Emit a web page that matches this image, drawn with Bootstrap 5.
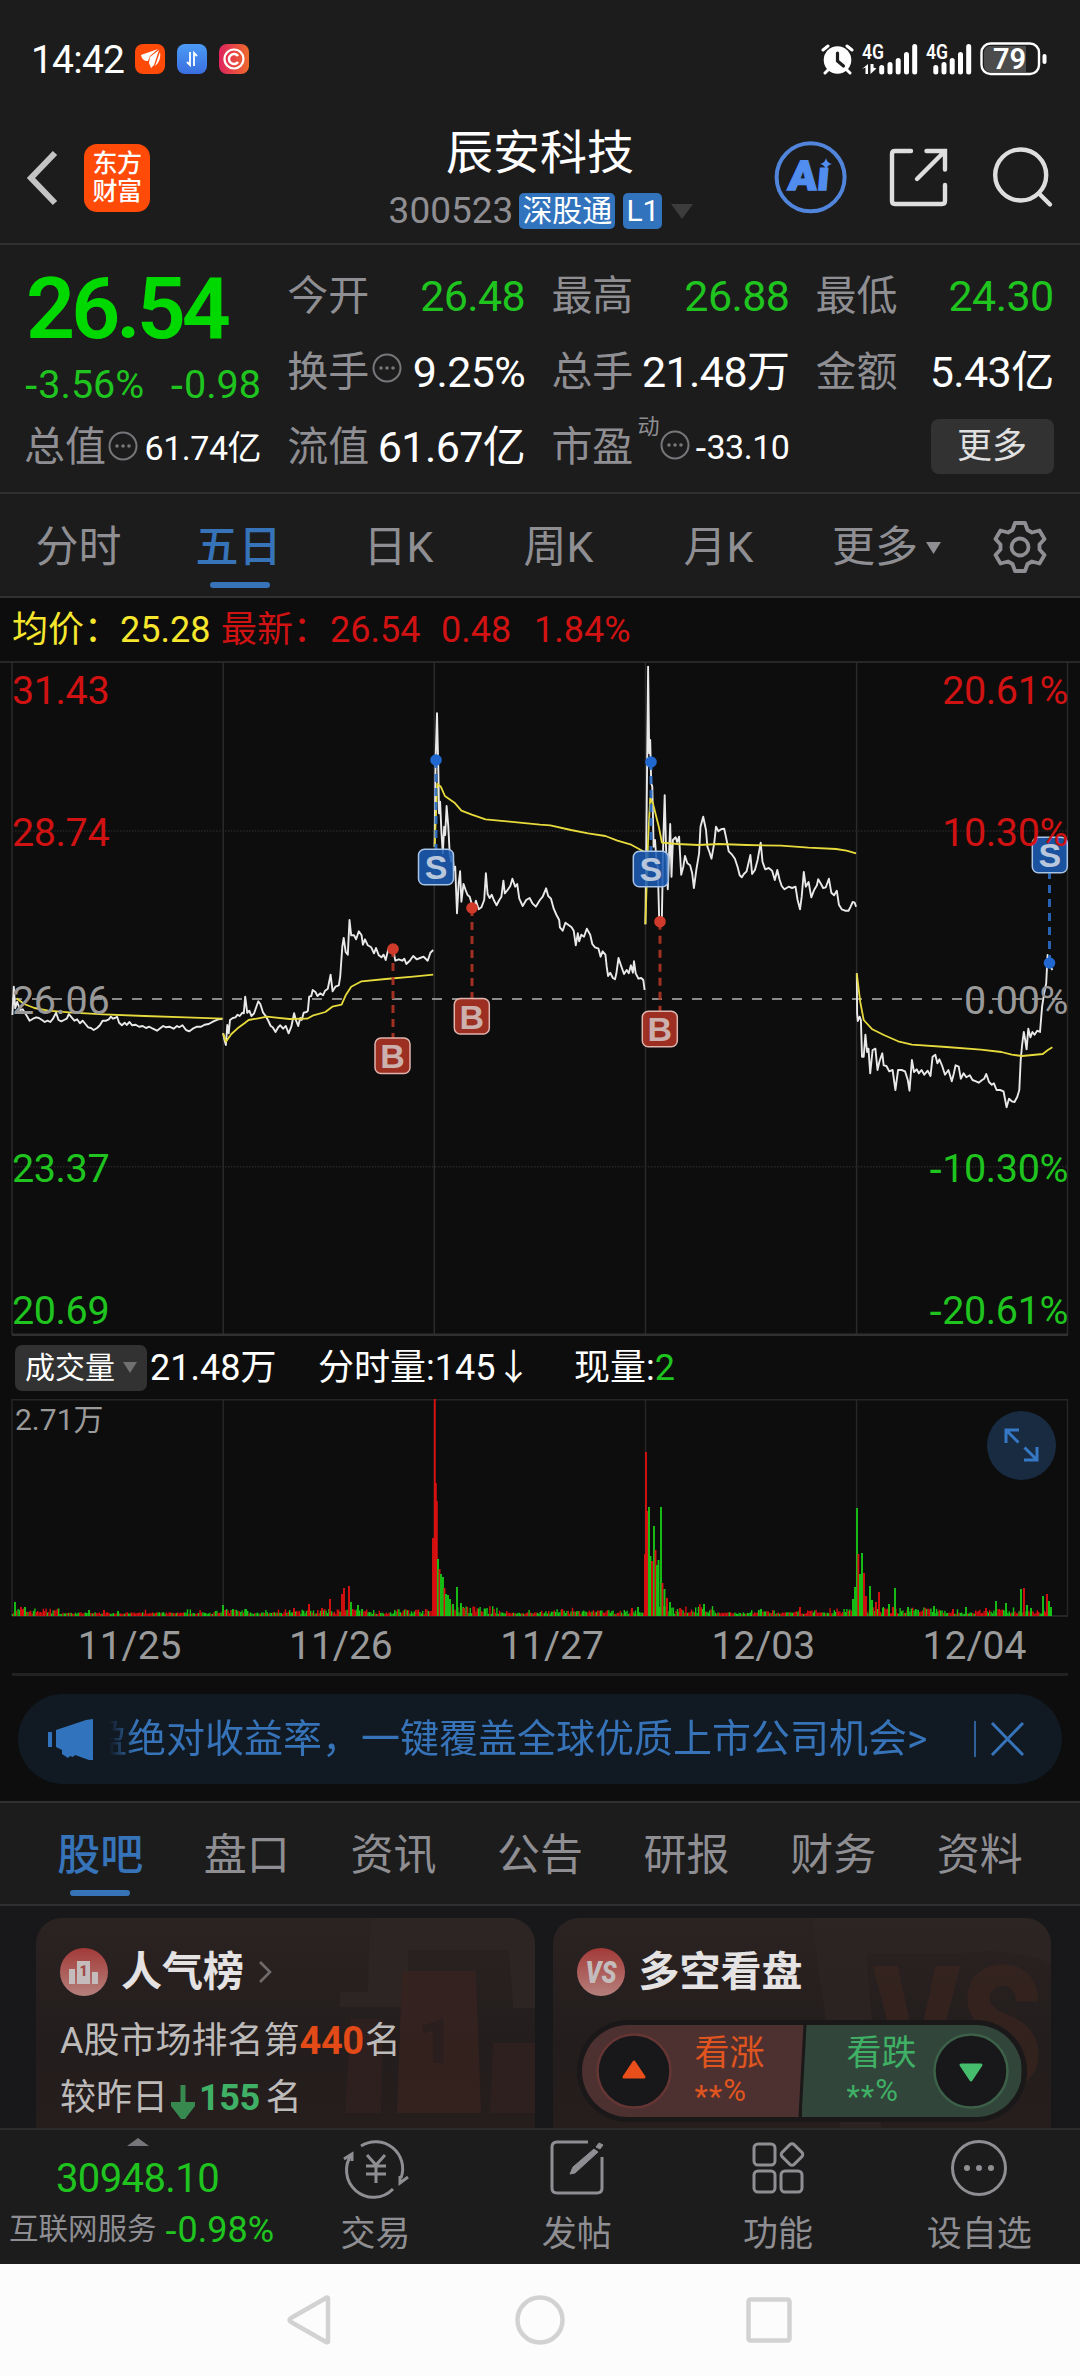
<!DOCTYPE html>
<html lang="zh-CN">
<head>
<meta charset="utf-8">
<meta name="viewport" content="width=1080">
<title>辰安科技 300523</title>
<link rel="stylesheet" href="https://cdn.jsdelivr.net/npm/bootstrap@5.3.0/dist/css/bootstrap.min.css">
<style>
  :root { --up:#d01212; --down:#1fc41f; --blue:#3673b8; --dim:#8e8e93; --panel:#1c1c1c; --ink:#0d0d0d; }
  body { width:1080px; height:2376px; overflow:hidden; background:var(--ink); color:#fff;
         font-family:Roboto,"Noto Sans CJK SC",sans-serif; line-height:1; }
  svg { display:block; flex:none; }
  .panel { background:var(--panel); }
  .ruled { border-bottom:2px solid #303032; }
  .dim { color:var(--dim); } .fall { color:var(--down); } .rise { color:var(--up); } .brand { color:var(--blue); }
  .hy { font-family:"DejaVu Sans",sans-serif; }
  .statusbar { height:118px; padding:2px 33px 0 31px; font-size:39px; }
  .clock { letter-spacing:-.8px; width:94px; }
  .titlebar { height:127px; display:grid; grid-template-columns:1fr auto 1fr; padding:0 26px 5px 26px; }
  .stockname { font-size:47px; line-height:60px; font-weight:400; }
  .coderow { margin:10px -2px 0 0; }
  .stockcode { font-size:37px; line-height:36px; letter-spacing:0; }
  .tagbox { background:#3273bd; border-radius:5px; height:36px; line-height:35px; font-size:30px; padding:0 3px; }
  .applogo { width:66px; height:68px; border-radius:13px; background:#ff4a08; font-size:25px; line-height:28px; font-weight:500; letter-spacing:-.5px; }
  .quote { height:249px; padding:14px 25px 0 24px; display:grid; grid-template-columns:237px repeat(3,238px); column-gap:26.2px; }
  .qline { height:75.4px; display:flex; align-items:center; font-size:41px; white-space:nowrap; }
  .qline b { font-weight:400; font-size:43px; margin-left:auto; letter-spacing:-.6px; }
  .qline b.slim { font-size:34px; letter-spacing:-.5px; }
  .bigprice { height:98px; line-height:100px; font-size:86px; font-weight:600; letter-spacing:-4px; color:#00d900; padding-left:2px; }
  .chg { height:53px; line-height:54px; font-size:39.5px; }
  .morebtn { width:123px; height:55px; border-radius:8px; background:#323232; color:#e0e0e0; font-size:35px; margin:-2px 0 0 auto; }
  .supmark { font-size:22px; align-self:flex-start; margin-top:6px; }
  .periods { height:104px; }
  .periods .cell { width:160px; position:relative; font-size:43px; padding:5px 3px 0 0; }
  .bar { position:absolute; bottom:8px; left:50%; width:60px; height:6px; margin-left:-30px; border-radius:3px; background:var(--blue); }
  .legendrow { height:63px; padding:1px 12px 0; font-size:36px; }
  .kchart text { font-size:39.5px; letter-spacing:-.4px; }
  .volhead { height:63px; padding:0 15px; font-size:36px; }
  .volbtn { width:132px; height:46px; border-radius:7px; background:#323232; font-size:30px; padding-left:10px; margin-right:3px; }
  .volwrap { position:relative; height:218px; }
  .expand { position:absolute; right:24px; top:12px; }
  .dates { height:59px; margin:0 12px; padding:2px 0 0 12px; border-bottom:3px solid #222; font-size:39px; color:#9a9a9a; }
  .dates span { flex:0 0 211.3px; text-align:center; margin-right:-.1px; }
  .pillnote { height:90px; margin:18px 18px 17px; border-radius:45px; background:#111922; padding-left:29px; }
  .ticker { width:835px; overflow:hidden; white-space:nowrap; font-size:39px; line-height:60px; margin-left:15px;
            -webkit-mask-image:linear-gradient(90deg,transparent 0,#000 26px); mask-image:linear-gradient(90deg,transparent 0,#000 26px); }
  .ticker span { margin-left:-21px; }
  .channels { height:105px; padding:0 27px; border-top:2px solid #303032; }
  .channels .cell { flex:1 1 0; position:relative; font-size:43px; padding-top:4px; }
  .feed { height:222px; background:#18181a; padding:12px 29px 0 36px; gap:18px; overflow:hidden; }
  .tile { position:relative; height:210px; border-radius:26px 26px 0 0; background:linear-gradient(180deg,#2b2322,#231d1d 60%,#261e1d); overflow:hidden; }
  .tile > svg { position:absolute; right:0; top:0; }
  .tile > div { position:relative; }
  .tilehead { font-size:41px; font-weight:700; height:54px; margin-top:27px; padding-left:24px; color:#e4e2e2; }
  .tileline { font-size:36px; height:57px; padding-left:24px; color:#bdbaba; white-space:nowrap; }
  .tileline b { font-size:38px; letter-spacing:-.4px; }
  .vote { margin:21px 0 0 24px; width:450px; height:102px; border-radius:51px; background:#1a1819; padding:5px; color:#e0551f; }
  .votehalf { width:222px; height:92px; background:#4c3130; border-radius:46px 0 0 46px; clip-path:polygon(0 0,100% 0,calc(100% - 5px) 100%,0 100%); }
  .votehalf.short { background:#31453a; color:#3fb065; border-radius:0 46px 46px 0; clip-path:polygon(5px 0,100% 0,100% 100%,0 100%); margin-left:-2px; width:220px; }
  .votetext { font-size:35px; line-height:40px; width:72px; }
  .votetext small { display:block; font-size:31px; line-height:34px; }
  .votetext i { font-style:normal; position:relative; top:6px; letter-spacing:1px; }
  .dock { height:136px; border-top:2px solid #2b2b2c; }
  .dock .cell { width:201.4px; font-size:35px; line-height:50px; }
  .idx { font-size:40px; line-height:56px; margin-top:5px; letter-spacing:-.6px; }
  .sector { height:46px; width:275px; gap:8px; padding-left:8px; }
  .sysnav { height:112px; background:#fcfcfc; }
</style>
<script src="https://cdn.jsdelivr.net/npm/bootstrap@5.3.0/dist/js/bootstrap.bundle.min.js"></script>
</head>
<body>

<div class="statusbar panel d-flex align-items-center">
  <span class="clock">14:42</span>
  <svg style="margin:-2px 0 0 10px" width="116" height="30" viewBox="135 44 116 30">
    <defs>
      <linearGradient id="gb" x2="0" y2="1"><stop stop-color="#4c9bf5"/><stop offset="1" stop-color="#3a6ee0"/></linearGradient>
      <linearGradient id="gr" x2="1" y2="0"><stop stop-color="#e0245e"/><stop offset="1" stop-color="#ee6a2c"/></linearGradient>
    </defs>
    <rect x="135" y="44" width="30" height="30" rx="8" fill="#ff4a08"/>
    <path d="M141 55l17-6-8 7-2 5c-4 0-6-2-7-6zM149 63l1-6 9-7-5 15-3 3zM155 66l5-14c1 6-1 11-5 14z" fill="#fff"/>
    <rect x="177" y="44" width="30" height="30" rx="8" fill="url(#gb)"/>
    <path d="M190 52v13l-3-3M194 66V53l3 3" fill="none" stroke="#fff" stroke-width="1.8"/>
    <rect x="219" y="44" width="30" height="30" rx="8" fill="url(#gr)"/>
    <circle cx="234" cy="59" r="9.5" fill="none" stroke="#fff" stroke-width="2.2"/>
    <path d="M238 56a5 5 0 1 0 0 6" fill="none" stroke="#fff" stroke-width="2.4"/>
  </svg>
  <svg class="ms-auto" style="margin-top:-2px" width="226" height="36" viewBox="820 41 226 36">
    <g fill="none" stroke="#fff" stroke-linecap="round">
      <path stroke-width="3" d="M822 50l5-4M851 50l-5-4M828 69l-4 4M845 69l4 4"/>
    </g>
    <circle cx="836.5" cy="60" r="13.8" fill="#fff"/>
    <path d="M836.5 53v8l6 5" fill="none" stroke="#1c1c1c" stroke-width="3.2" stroke-linecap="round"/>
    <g fill="#fff" font-size="20" font-weight="600">
      <text x="861" y="58.500" textLength="22" lengthAdjust="spacingAndGlyphs">4G</text>
      <text x="925" y="58.500" textLength="22" lengthAdjust="spacingAndGlyphs">4G</text>
    </g>
    <path d="M861 69l6-5v10h-2.500v-6.500zM869.500 64v10l6-5.500-3-1v-3.500z" fill="#fff"/>
    <g stroke="#fff" stroke-width="5" stroke-linecap="round">
      <path d="M880.700 67.500v4.500M889 64.500v7.500M897.200 60.500v11.500M905.500 54.500v17.500M913.700 46.500v25.500M934.800 67.500v4.500M943 64.500v7.500M951.200 60.500v11.500M959.500 54.500v17.500M967.700 46.500v25.500"/>
    </g>
    <rect x="980.500" y="43.500" width="57.500" height="30.500" rx="9" fill="none" stroke="#fff" stroke-width="2.4"/>
    <path d="M989 46h36v26h-36q-6 0-6-7v-12q0-7 6-7z" fill="#4c4c4c"/>
    <rect x="1041.500" y="54" width="4" height="10" rx="2" fill="#fff"/>
    <text x="1008.500" y="69" text-anchor="middle" font-size="29" font-weight="600" fill="#fff">79</text>
  </svg>
</div>

<header class="titlebar panel ruled">
  <div class="d-flex align-items-center">
    <svg width="34" height="58" viewBox="0 0 34 58"><path d="M29 4L5 29l24 25" fill="none" stroke="#c4c4c4" stroke-width="6"/></svg>
    <div class="applogo ms-4 text-center d-flex flex-column justify-content-center"><span>东方</span><span>财富</span></div>
  </div>
  <div class="d-flex flex-column align-items-center">
    <div class="stockname" style="margin-top:5px">辰安科技</div>
    <div class="coderow d-flex align-items-center">
      <span class="stockcode dim" style="margin-right:6px">300523</span>
      <span class="tagbox me-2">深股通</span><span class="tagbox">L1</span>
      <svg style="margin-left:9px" width="22" height="15"><path d="M0 0h22L11 15z" fill="#3c3c3c"/></svg>
    </div>
  </div>
  <div class="d-flex align-items-center justify-content-end">
    <svg width="280" height="76" viewBox="772 140 280 76" fill="none">
      <circle cx="808.600" cy="177.300" r="34" stroke="#5085db" stroke-width="4"/>
      <text x="786" y="190.500" font-size="41" font-weight="900" fill="#508dee" textLength="41" lengthAdjust="spacingAndGlyphs" stroke="#508dee" stroke-width="1.500" transform="translate(16 0) skewX(-5)">Aı</text>
      <path d="M824 158q1 5 6 6-5 1-6 6-1-5-6-6 5-1 6-6z" fill="#508dee"/>
      <g stroke="#dedede" stroke-width="4.400" stroke-linecap="round">
        <path d="M909 151h-16q-3 0-3 3v47q0 3 3 3h47q3 0 3-3v-16"/>
        <path d="M924.500 151h18.500v18.500M942 152l-27 27"/>
        <circle cx="1018.700" cy="175" r="25.500"/><path d="M1037 193.500l11 11"/>
      </g>
    </svg>
  </div>
</header>

<section class="quote panel ruled">
  <div>
    <div class="bigprice">26.54</div>
    <div class="chg fall d-flex justify-content-between"><span><span class="hy">-</span>3.56%</span><span><span class="hy">-</span>0.98</span></div>
    <div class="qline dim">总值<svg width="30" height="30" style="margin:-4px 0 0 2px"><use href="#more-dot"/></svg><b class="slim text-white">61.74亿</b></div>
  </div>
  <div>
    <div class="qline dim">今开<b class="fall">26.48</b></div>
    <div class="qline dim">换手<svg width="30" height="30" style="margin:-8px 0 0 3px"><use href="#more-dot"/></svg><b class="text-white">9.25%</b></div>
    <div class="qline dim">流值<b class="text-white">61.67亿</b></div>
  </div>
  <div>
    <div class="qline dim">最高<b class="fall">26.88</b></div>
    <div class="qline dim">总手<b class="text-white">21.48万</b></div>
    <div class="qline dim">市盈<span class="supmark ms-1">动</span><svg width="30" height="30" style="margin:-4px 0 0 1px"><use href="#more-dot"/></svg><b class="slim text-white"><span class="hy">-</span>33.10</b></div>
  </div>
  <div>
    <div class="qline dim">最低<b class="fall">24.30</b></div>
    <div class="qline dim">金额<b class="text-white">5.43亿</b></div>
    <div class="qline"><div class="morebtn d-flex align-items-center justify-content-center">更多</div></div>
  </div>
</section>
<svg width="0" height="0" class="position-absolute">
  <symbol id="more-dot" viewBox="0 0 30 30"><circle cx="15" cy="15" r="13.500" fill="none" stroke="#77777b" stroke-width="2"/><g fill="#77777b"><circle cx="9" cy="15" r="1.800"/><circle cx="15" cy="15" r="1.800"/><circle cx="21" cy="15" r="1.800"/></g></symbol>
</svg>

<nav class="periods panel ruled d-flex dim">
  <div class="cell d-flex align-items-center justify-content-center">分时</div>
  <div class="cell d-flex align-items-center justify-content-center brand fw-medium">五日<span class="bar"></span></div>
  <div class="cell d-flex align-items-center justify-content-center">日K</div>
  <div class="cell d-flex align-items-center justify-content-center">周K</div>
  <div class="cell d-flex align-items-center justify-content-center">月K</div>
  <div class="cell d-flex align-items-center justify-content-center ps-3">更多<svg class="ms-2" width="15" height="12"><path d="M0 0h15L7.500 12z" fill="#8e8e93"/></svg></div>
  <div class="flex-fill d-flex align-items-center justify-content-center pt-1">
    <svg width="54" height="54" viewBox="-27 -27 54 54" fill="none" stroke="#8e8e93" stroke-width="3.800" stroke-linejoin="round">
      <path d="M-5-24H5L7.500-17 12-14.500 19.500-16.500 24.500-8 19.500-2.500V2.500L24.500 8 19.500 16.500 12 14.500 7.500 17 5 24H-5L-7.500 17-12 14.500-19.500 16.500-24.500 8-19.500 2.500V-2.500L-24.500-8-19.500-16.500-12-14.500-7.500-17Z"/>
      <circle r="8.500"/>
    </svg>
  </div>
</nav>

<div class="legendrow d-flex align-items-center">
  <span style="color:#f6e72e;width:108px">均价：</span><span style="color:#f6e72e;width:101px">25.28</span>
  <span class="rise" style="width:109px">最新：</span><span class="rise" style="width:111px">26.54</span><span class="rise" style="width:93px">0.48</span><span class="rise">1.84%</span>
</div>

<svg class="kchart" width="1080" height="675" viewBox="0 661 1080 675">
  <g stroke="#2a2a2b" stroke-width="1.500" fill="none">
    <path d="M0 662H1080" stroke="#303030"/>
    <path d="M12 662V1335M1067.500 662V1335M223.200 662V1335M434.300 662V1335M645.500 662V1335M856.600 662V1335"/>
    <path d="M12 831H1067M12 1166.700H1067" stroke-dasharray="1.500 1.500" stroke="#262626"/>
    <path d="M12 1334.800H1068" stroke="#303030" stroke-width="2.500"/>
  </g>
  <path d="M12 999H1067" stroke="#8b8b8b" stroke-width="2" stroke-dasharray="10 10"/>
  <g id="marks"></g>
  <g id="lines" fill="none" stroke-linejoin="round"></g>
  <g class="axis">
    <g fill="#d01212"><text x="12" y="703.500">31.43</text><text x="12" y="845.500">28.74</text>
      <text x="1068" y="703.500" text-anchor="end">20.61%</text><text x="1068" y="845.500" text-anchor="end">10.30%</text></g>
    <g fill="#999"><text x="12" y="1014">26.06</text><text x="1068" y="1014" text-anchor="end">0.00%</text></g>
    <g fill="#1fc41f"><text x="12" y="1182">23.37</text><text x="12" y="1324">20.69</text>
      <text x="1068" y="1182" text-anchor="end"><tspan class="hy">-</tspan>10.30%</text><text x="1068" y="1324" text-anchor="end"><tspan class="hy">-</tspan>20.61%</text></g>
  </g>
</svg>

<div class="volhead d-flex align-items-center">
  <div class="volbtn d-flex align-items-center">成交量<svg class="ms-2" width="14" height="11"><path d="M0 0h14L7 11z" fill="#707070"/></svg></div>
  <span style="width:168px">21.48万</span><span style="width:256px">分时量:145↓</span><span>现量:<span class="fall">2</span></span>
</div>

<div class="volwrap">
  <svg width="1080" height="218" viewBox="0 1398 1080 218">
    <g stroke="#262627" stroke-width="1.500" fill="none">
      <path d="M12 1398.700H1068M12 1398V1615M1067.500 1398V1615M223.200 1398V1615M434.300 1398V1615M645.500 1398V1615M856.600 1398V1615"/>
      <path d="M12 1615H1068" stroke-width="2"/>
    </g>
    <g id="vols"></g>
    <text x="15" y="1429" font-size="30" fill="#9a9a9a">2.71万</text>
  </svg>
  <svg class="expand" width="69" height="69" viewBox="0 0 69 69"><circle cx="34.500" cy="34.500" r="34.500" fill="#182b40"/>
    <path d="M19 32V19h13M19.500 19.500l12 12M50 36v13H37M49.500 48.500l-12-12" fill="none" stroke="#3678c4" stroke-width="3"/></svg>
</div>

<div class="dates d-flex align-items-center"><span>11/25</span><span>11/26</span><span>11/27</span><span>12/03</span><span>12/04</span></div>

<div class="pillnote d-flex align-items-center brand">
  <svg width="47" height="42" viewBox="47 1717 47 42" fill="#3273bd"><path d="M48 1731h4v15h-4zM56 1729l30-10 7-1v41h-4l-14-5-2 2-3-1-2 2-6-4v-4l-6-3z"/></svg>
  <div class="ticker"><span>盈绝对收益率，一键覆盖全球优质上市公司机会&gt;</span></div>
  <svg style="margin-left:29px" width="54" height="40" viewBox="0 0 54 40" fill="none" stroke="#3673b8"><path d="M2 2v36" stroke-width="1.600"/><path d="M19 4l31 32M50 4L19 36" stroke-width="3"/></svg>
</div>

<nav class="channels panel ruled d-flex dim">
  <div class="cell d-flex align-items-center justify-content-center brand fw-medium">股吧<span class="bar"></span></div>
  <div class="cell d-flex align-items-center justify-content-center">盘口</div>
  <div class="cell d-flex align-items-center justify-content-center">资讯</div>
  <div class="cell d-flex align-items-center justify-content-center">公告</div>
  <div class="cell d-flex align-items-center justify-content-center">研报</div>
  <div class="cell d-flex align-items-center justify-content-center">财务</div>
  <div class="cell d-flex align-items-center justify-content-center">资料</div>
</nav>

<section class="feed d-flex">
  <div class="tile flex-fill w-50">
    <svg width="499" height="240" viewBox="36 1918 499 240">
      <path d="M370 1918h165v90h-22l-4-58H408v57h-68v-15h28z" fill="#2d2523"/>
      <path d="M402 1971h74l5 142h-84z" fill="#37231f" opacity=".8"/>
      <path d="M351 2019h32l-2 94h-36zM493 2043h42v70h-45z" fill="#33221f" opacity=".65"/>
      <text x="418" y="2063" font-size="62" font-weight="900" fill="#2a1f1e">1</text>
    </svg>
    <div class="tilehead d-flex align-items-center">
      <svg class="me-3" width="48" height="48" viewBox="0 0 48 48"><defs><linearGradient id="gc" x2="0" y2="1"><stop stop-color="#a33a38"/><stop offset="1" stop-color="#b5807c"/></linearGradient></defs>
        <circle cx="24" cy="24" r="24" fill="url(#gc)"/><path d="M9 21h6v15H9zM17 13h13v23H17zM32 24h6v12h-6z" fill="#c4bcbc"/><text x="23.500" y="28" text-anchor="middle" font-size="14" font-weight="900" fill="#a04a48">1</text></svg>
      <span style="margin-left:-3px">人气榜</span>
      <svg style="margin-left:14px" width="16" height="26"><path d="M2 3l10 10L2 23" fill="none" stroke="#716c6c" stroke-width="2.600"/></svg>
    </div>
    <div class="tileline d-flex align-items-center" style="margin-top:13px">A股市场排名第<b style="color:#e24a17">440</b><span style="margin-left:1px">名</span></div>
    <div class="tileline d-flex align-items-center">较昨日<svg style="margin:8px 4px 0 3px" width="24" height="34"><path d="M9.500 0h5v17H24v4L14 34h-4L0 21v-4h9.500z" fill="#38894f"/></svg><b style="color:#3fb065;font-size:36px">155</b><span style="margin-left:6px">名</span></div>
  </div>
  <div class="tile flex-fill w-50">
    <svg width="499" height="240" viewBox="553 1918 499 240">
      <path d="M813 1918h239v45q-40-16-90-10h-95l18 205h-40z" fill="#2f2725" opacity=".6"/>
      <text x="874" y="2086" font-size="168" font-weight="900" fill="#38241f" opacity=".75" textLength="170" lengthAdjust="spacingAndGlyphs">VS</text>
    </svg>
    <div class="tilehead d-flex align-items-center">
      <svg class="me-3" width="48" height="48" viewBox="0 0 48 48"><circle cx="24" cy="24" r="24" fill="url(#gc)"/><text x="24" y="35" text-anchor="middle" font-size="31" font-weight="900" font-style="italic" fill="#c4bcbc" textLength="31" lengthAdjust="spacingAndGlyphs">VS</text></svg>
      <span style="margin-left:-2px">多空看盘</span>
    </div>
    <div class="vote d-flex">
      <div class="votehalf d-flex align-items-center">
        <svg style="margin:0 23px 0 14px" width="76" height="76" viewBox="-38 -38 76 76"><circle r="36.500" fill="#18181a" stroke="#653634" stroke-width="2.500"/><path d="M0-9L10 6H-10z" fill="#e94f1b" stroke="#e94f1b" stroke-width="3" stroke-linejoin="round"/></svg>
        <div class="votetext">看涨<small><i>**</i>%</small></div>
      </div>
      <div class="votehalf short d-flex align-items-center justify-content-end">
        <div class="votetext">看跌<small><i>**</i>%</small></div>
        <svg style="margin:0 13px 0 14px" width="76" height="76" viewBox="-38 -38 76 76"><circle r="36.500" fill="#18181a" stroke="#3c6048" stroke-width="2.500"/><path d="M0 9L10-6H-10z" fill="#45bd6d" stroke="#45bd6d" stroke-width="3" stroke-linejoin="round"/></svg>
      </div>
    </div>
  </div>
</section>

<footer class="dock panel d-flex">
  <div class="d-flex flex-column align-items-center" style="width:275px">
    <svg style="margin-top:8px" width="22" height="8"><path d="M0 8h22L11 0z" fill="#77777b"/></svg>
    <div class="idx fall">30948.10</div>
    <div class="sector d-flex align-items-center justify-content-center">
      <span class="dim" style="font-size:29.500px">互联网服务</span><span class="fall" style="font-size:36px"><span class="hy">-</span>0.98%</span></div>
  </div>
  <div class="cell d-flex flex-column align-items-center dim">
    <svg width="68" height="68" viewBox="-34 -34 68 68" style="margin:4px 0 8px" fill="none" stroke="#8e8e93" stroke-width="3">
      <path d="M-15-22A27 27 0 0 1 25 10M-24-14A27 27 0 0 0 17 21"/><path d="M-32-9l8-5v7M32 9l-8 6v-7"/>
      <path d="M-9-13L0-3 9-13M-10-2h20M-10 6h20M0-3v18"/></svg>
    <span>交易</span></div>
  <div class="cell d-flex flex-column align-items-center dim">
    <svg width="68" height="68" viewBox="-34 -34 68 68" style="margin:4px 0 8px" fill="none" stroke="#8e8e93" stroke-width="3">
      <path d="M11-26h-31q-5 0-5 5V20q0 5 5 5H20q5 0 5-5V-11"/><path d="M-7 6L-4-1 17-19l4 3L-2 5zM19-21l3-4 4 2-3 4z" fill="#8e8e93" stroke-width="1"/></svg>
    <span>发帖</span></div>
  <div class="cell d-flex flex-column align-items-center dim">
    <svg width="68" height="68" viewBox="-34 -34 68 68" style="margin:4px 0 8px" fill="none" stroke="#8e8e93" stroke-width="3">
      <rect x="-24" y="-24" width="21" height="21" rx="4"/><rect x="-24" y="3" width="21" height="21" rx="4"/><rect x="3" y="3" width="21" height="21" rx="4"/>
      <rect x="5.500" y="-22" width="17" height="17" rx="3" transform="rotate(45 14 -13.500)"/></svg>
    <span>功能</span></div>
  <div class="cell d-flex flex-column align-items-center dim">
    <svg width="68" height="68" viewBox="-34 -34 68 68" style="margin:4px 0 8px"><circle r="26.500" fill="none" stroke="#8e8e93" stroke-width="3"/><g fill="#8e8e93"><circle cx="-12" r="3"/><circle r="3"/><circle cx="12" r="3"/></g></svg>
    <span>设自选</span></div>
</footer>

<div class="sysnav">
  <svg width="1080" height="112" viewBox="0 2264 1080 112" fill="none" stroke="#d2d2d2" stroke-width="4.500" stroke-linejoin="round">
    <path d="M328 2298v44q-1 1-2 0l-35-20q-3-2 0-4l35-20q1-1 2 0z"/><circle cx="540" cy="2320" r="22.500"/><rect x="748.500" y="2299.500" width="41" height="41" rx="2"/></svg>
</div>

<script>
const NS = 'http://www.w3.org/2000/svg';
function add(host, tag, attrs, text) {
  const e = document.createElementNS(NS, tag);
  for (const k in attrs) e.setAttribute(k, attrs[k]);
  if (text) e.textContent = text;
  document.getElementById(host).appendChild(e);
}
// Tick series: [x origin, "x,y x,y ..."] stored at about three units per pixel.
const K = 2.904;
function series(origin, raw, color, w) {
  const pts = raw.trim().split(/\s+/).map(p => p.split(',').map(Number));
  const d = pts.map(([x, y]) => (origin + x / K).toFixed(1) + ',' + (640 + y / 3).toFixed(1)).join(' ');
  add('lines', 'polyline', { points: d, stroke: color, 'stroke-width': w });
}
const price = [
 [0,"36,1125 40,1040 44,1105 50,1085 58,1110 66,1108 72,1118 78,1128 86,1142 96,1136 105,1132 113,1134 122,1140 130,1146 138,1142 146,1146 154,1136 163,1118 170,1140 178,1144 186,1140 194,1136 200,1122 208,1132 216,1142 224,1138 232,1150 240,1142 248,1152 256,1162 264,1164 272,1170 282,1164 290,1156 298,1142 308,1142 316,1138 322,1130 328,1136 334,1134 340,1130 346,1148 354,1156 362,1148 368,1155 376,1146 384,1156 394,1154 404,1160 414,1158 424,1164 434,1160 444,1166 456,1172 466,1164 474,1158 482,1162 492,1160 504,1166 514,1158 520,1162 530,1156 540,1170 550,1174 560,1166 572,1160 584,1160 594,1154 606,1152 620,1144 634,1138 646,1136"],
 [0,"648,1180 652,1200 656,1215 660,1155 664,1180 668,1140 676,1134 684,1132 690,1124 696,1128 704,1118 708,1120 712,1070 718,1118 724,1112 730,1128 738,1120 744,1102 750,1084 756,1092 764,1118 770,1126 778,1140 786,1158 792,1162 800,1176 808,1162 814,1156 822,1166 830,1158 838,1180 846,1160 854,1120 860,1142 866,1158 872,1134 876,1140 882,1118 890,1116 894,1112 898,1070 904,1068 908,1050 916,1056 922,1068 930,1060 938,1066 944,1052 952,1046 960,1004 966,1054 974,1040 984,1036 988,1010 994,920 998,894 1004,936 1010,944 1015,840 1020,886 1028,886 1034,898 1042,874 1050,886 1054,914 1060,898 1068,916 1078,922 1086,940 1092,924 1100,946 1108,952 1114,944 1120,960 1128,926 1134,930 1142,930 1148,962 1158,958 1168,962 1174,956 1180,972 1190,962 1200,948 1210,958 1220,954 1230,950 1242,962 1250,938 1258,930"],
 [0,"1262,620 1265,360 1269,220 1273,400 1275,520 1278,485 1282,580 1286,640 1290,560 1293,585 1297,498 1302,560 1306,640 1310,665 1314,640 1318,690 1322,680 1327,820 1332,730 1336,694 1340,785 1346,732 1352,750 1358,765 1364,770 1370,792 1378,800 1382,782 1390,808 1398,802 1406,780 1411,700 1416,762 1422,774 1428,764 1434,780 1442,796 1450,780 1456,770 1462,722 1466,760 1474,750 1482,738 1488,716 1496,740 1502,732 1508,776 1518,798 1528,780 1538,774 1546,790 1556,800 1568,780 1576,770 1586,745 1592,768 1600,776 1608,806 1616,825 1624,840 1626,862 1634,872 1642,848 1652,856 1660,862 1666,872 1672,916 1678,880 1682,904 1688,884 1696,890 1704,866 1714,884 1720,912 1728,922 1738,926 1744,950 1750,934 1758,944 1762,980 1766,1008 1772,998 1780,1014 1786,1018 1790,1000 1796,954 1804,978 1812,1002 1820,990 1826,1000 1832,976 1838,998 1841,964 1846,1000 1854,1016 1862,1014 1868,1020 1872,1050"],
 [540,"306,853 310,500 314,80 317,340 320,300 323,430 326,440 330,620 334,600 338,660 342,680 346,830 350,860 354,830 358,600 362,466 366,620 371,748 375,640 378,552 382,710 386,600 394,592 398,606 404,590 410,704 416,680 421,648 428,670 436,676 442,700 447,744 454,690 462,640 466,560 474,530 482,570 486,620 492,636 498,656 506,610 511,560 518,574 526,568 535,566 542,600 548,634 558,644 566,656 574,682 580,706 586,712 592,702 600,694 611,645 616,702 624,690 632,660 641,608 646,665 654,688 664,684 674,692 682,720 689,690 696,720 702,738 710,748 722,740 732,744 742,740 748,780 755,808 760,770 766,696 772,740 780,726 788,772 796,750 804,736 808,718 816,732 822,744 830,742 839,716 846,758 854,766 862,752 868,794 876,808 886,812 896,812 902,800 908,786 914,788 918,800"],
 [540,"920,1000 921,1120 923,1143 928,1130 932,1140 935,1250 940,1250 945,1184 950,1236 954,1226 959,1300 966,1230 974,1226 980,1290 986,1264 994,1240 998,1276 1006,1278 1014,1294 1024,1290 1032,1350 1040,1290 1050,1290 1060,1294 1068,1320 1073,1352 1080,1260 1086,1296 1094,1288 1100,1300 1108,1290 1116,1304 1126,1292 1134,1308 1140,1250 1148,1244 1154,1270 1160,1258 1168,1278 1176,1304 1186,1290 1196,1324 1202,1300 1207,1276 1216,1280 1222,1316 1230,1300 1238,1312 1248,1306 1256,1320 1266,1324 1274,1328 1284,1320 1290,1316 1296,1302 1304,1326 1312,1334 1318,1330 1326,1350 1336,1350 1346,1354 1351,1380 1355,1402 1362,1376 1370,1384 1378,1386 1386,1370 1392,1350 1396,1260 1400,1215 1405,1176 1409,1200 1413,1228 1418,1166 1424,1192 1430,1176 1436,1184 1444,1172 1452,1176 1458,1100 1464,1060 1470,1030 1474,945 1480,975 1488,990"]];
const average = [
 [0,"48,1075 70,1092 100,1104 140,1112 200,1117 300,1123 420,1128 540,1132 646,1136"],
 [0,"648,1180 656,1205 672,1182 690,1165 710,1150 722,1140 750,1135 775,1130 840,1137 892,1136 910,1126 945,1116 965,1100 992,1094 1004,1066 1020,1040 1050,1024 1120,1017 1200,1010 1258,1004"],
 [0,"1262,620 1270,432 1280,440 1292,468 1320,488 1340,512 1370,524 1410,538 1480,545 1568,554 1598,556 1658,570 1708,580 1758,588 1793,602 1833,614 1872,636"],
 [540,"306,853 314,600 320,475 328,490 345,560 354,608 400,612 460,615 520,612 600,615 700,617 780,623 860,627 890,632 918,640"],
 [540,"920,1000 930,1085 940,1140 965,1168 1000,1186 1040,1204 1080,1214 1180,1221 1280,1229 1340,1236 1370,1244 1400,1248 1460,1242 1475,1230 1488,1222"]];
price.forEach(p => series(p[0], p[1], '#e9e9e9', 1.9));
average.forEach(p => series(p[0], p[1], '#e6da3c', 1.8));

// Trade markers: dot x, dot y, badge left, badge top, side
[[436,760,418.5,849.3,'S'],[393,949,375,1038,'B'],[472,908,454.3,998.5,'B'],[651,762,633.3,851.3,'S'],[660,921.7,642.3,1011.3,'B'],[1049.5,963,1032.3,837.3,'S']]
.forEach(([x, y, bx, by, s]) => {
  const c = s === 'S' ? '#1c5cb4' : '#b03424';
  const end = by > y ? by : by + 36;
  add('lines', 'path', { d: `M${x} ${y}V${end}`, stroke: s === 'S' ? '#2a6cc8' : c, 'stroke-width': 3, 'stroke-dasharray': '8 6', opacity: .9 });
  add('lines', 'circle', { cx: x, cy: y, r: 5.8, fill: s === 'S' ? '#2067d0' : '#d03a2a' });
  add('lines', 'rect', { x: bx, y: by, width: 35, height: 35.5, rx: 6, fill: c, 'fill-opacity': .88, stroke: s === 'S' ? '#a9c3e6' : '#dfb4ae', 'stroke-width': 1.5 });
  add('lines', 'text', { x: bx + 17.5, y: by + 30, 'text-anchor': 'middle', fill: s === 'S' ? '#b9c7dc' : '#ccb0ae', style: 'font:bold 34px "Liberation Sans",sans-serif;letter-spacing:0' }, s);
});

// Minute volume: low random floor plus the listed peaks [x, height, side].
let seed = 7;
const rnd = () => (seed = (seed * 16807) % 2147483647) / 2147483647;
const RED = '#d81010', GREEN = '#17c417';
const busy = [[12,60,6],[210,250,5],[285,375,5],[395,434,5],[434,500,8],[540,645,4],[645,715,8],[755,775,4],[795,815,4],[830,857,6],[857,945,7],[975,1052,5]];
for (let x = 12.5; x < 1052; x += 1.4) {
  const b = busy.find(v => x >= v[0] && x < v[1]);
  const h = 2 + rnd() * (b ? b[2] : 1.8) + (rnd() > .95 ? 3 : 0);
  add('vols', 'path', { d: `M${x.toFixed(1)} 1615v${-h.toFixed(1)}`, stroke: rnd() > (x < 200 ? .4 : .5) ? RED : GREEN, 'stroke-width': 1.4 });
}
[[15,14,1],[21,9,0],[25,9,1],[89,6,1],[104,6,0],[118,5,1],[223,11,1],[233,7,1],[246,7,1],[294,8,0],[309,12,0],[322,8,0],[330,17,0],[342,22,0],[344,28,0],[349,30,0],[351,14,1],[358,11,1],[362,7,1],
 [433,78,0],[434.8,217,0],[435.8,133,0],[436.8,115,0],[438,57,1],[439.5,47,0],[441,42,1],[443,39,1],[444.5,28,0],[446,22,1],[448,21,1],[450,17,1],[453,12,1],[457,29,1],[461,13,1],[464,8,0],
 [562,7,0],[632,8,0],[638,9,1],[645,62,0],[646,164,0],[647.5,105,0],[649,109,1],[650.5,60,1],[652,55,0],[654,90,1],[655.5,66,0],[657,51,1],[658.5,56,1],[661,109,1],[662.5,33,0],[664.5,27,1],[667,18,0],[670,14,1],[680,8,0],[704,12,1],[761,7,1],[800,9,0],
 [853,17,1],[855,29,1],[857,108,1],[858.3,62,0],[860,42,1],[862,63,1],[864,43,0],[866,20,0],[870,30,1],[872,16,1],[876,14,0],[879,24,0],[883,8,1],[889,12,1],[893,9,0],[895,28,1],[908,9,1],[934,10,1],[953,7,0],[966,9,1],[986,8,0],[996,15,1],[1006,13,1],[1021,27,1],[1024,28,0],[1027,11,1],[1031,8,1],[1043,20,1],[1047,22,0],[1049,15,1],[1051,9,1]]
.forEach(([x, h, g]) => add('vols', 'path', { d: `M${x} 1615v${-h}`, stroke: g ? GREEN : RED, 'stroke-width': 1.9 }));
</script>
</body>
</html>
